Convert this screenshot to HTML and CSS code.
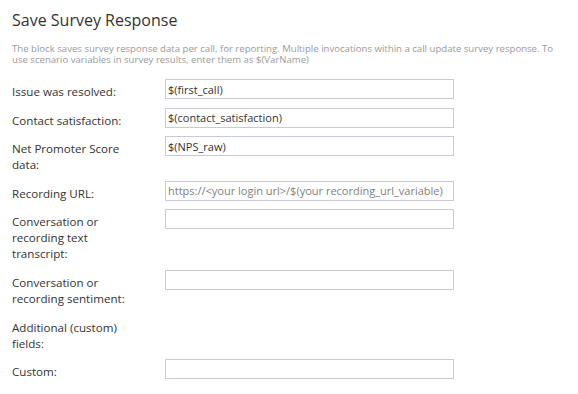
FILE: index.html
```html
<!DOCTYPE html>
<html lang="en">
<head>
  <meta charset="UTF-8">
  <title>Save Survey Response</title>
  <link rel="stylesheet" href="styles.css">
</head>
<body>
  <div class="panel">
    <h1 class="title">Save Survey Response</h1>
    <p class="desc">The block saves survey response data per call, for reporting. Multiple invocations within a call update survey response. To use scenario variables in survey results, enter them as $(VarName)</p>

    <!-- Champs du formulaire -->
    <form class="form">
      <label class="lbl">Issue was resolved:</label>
      <input class="field" type="text" value="$(first_call)">

      <label class="lbl">Contact satisfaction:</label>
      <input class="field" type="text" value="$(contact_satisfaction)">

      <label class="lbl">Net Promoter Score data:</label>
      <input class="field" type="text" value="$(NPS_raw)">

      <label class="lbl">Recording URL:</label>
      <input class="field" type="text" placeholder="https://<your login url>/$(your recording_url_variable)">

      <label class="lbl">Conversation or recording text transcript:</label>
      <input class="field" type="text">

      <label class="lbl">Conversation or recording sentiment:</label>
      <input class="field" type="text">

      <label class="lbl">Additional (custom) fields:</label>
      <div></div>

      <label class="lbl">Custom:</label>
      <input class="field" type="text">
    </form>
  </div>
</body>
</html>
```

FILE: styles.css
```css
* {
  margin: 0;
  padding: 0;
  box-sizing: border-box;
}

body {
  font-family: 'Open Sans', 'DejaVu Sans', sans-serif;
  background: #fff;
  color: #333;
  width: 578px;
  height: 394px;
  overflow: hidden;
}

.panel {
  padding: 7px 8px 0 12px;
}

.title {
  font-size: 16px;
  font-weight: 400;
  color: #333;
  line-height: 26px;
}

.desc {
  margin-top: 10px;
  font-size: 9.6px;
  line-height: 11px;
  color: #9a9a9a;
}

.form {
  margin-top: 14px;
  display: grid;
  grid-template-columns: 130px 289px;
  column-gap: 23px;
  row-gap: 7.6px;
  align-items: start;
}

.lbl {
  padding-top: 5px;
  font-size: 11.6px;
  line-height: 16px;
  color: #333;
}

.field {
  height: 20px;
  width: 289px;
  border: 1px solid #c9c9d9;
  padding: 0 2px;
  font-family: 'Open Sans', 'DejaVu Sans', sans-serif;
  font-size: 11px;
  color: #333;
  outline: none;
}

.field::placeholder {
  color: #808080;
}
```
